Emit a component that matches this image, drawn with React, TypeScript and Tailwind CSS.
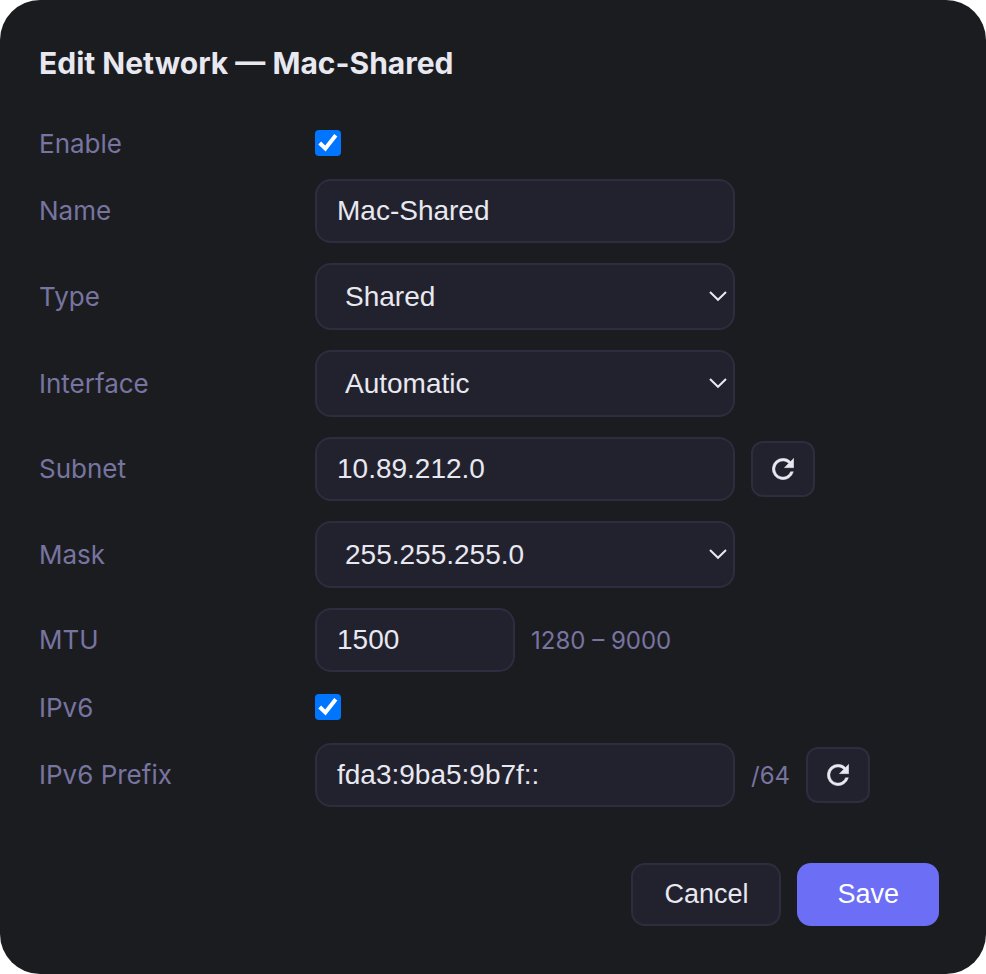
import { useState } from "react";

const fieldClass =
  "bg-[#22222e] border-2 border-[#2e2c3e] rounded-2xl font-['Liberation_Sans',sans-serif] text-[28px] leading-8 text-[#e8e8f0]";

function Row({ id, label, children }: { id: string; label: string; children: React.ReactNode }) {
  return (
    <div className="flex items-center gap-4 min-h-[31px]">
      <label htmlFor={id} className="w-[260px] shrink-0 text-[26px] leading-[30px] text-[#7874a0]">
        {label}
      </label>
      {children}
    </div>
  );
}

type TextFieldProps = {
  id: string;
  value: string;
  onChange: (value: string) => void;
  width?: string;
};

function TextField({ id, value, onChange, width = "w-[420px]" }: TextFieldProps) {
  return (
    <input
      id={id}
      type="text"
      value={value}
      onChange={(e) => onChange(e.target.value)}
      className={`${fieldClass} ${width} h-16 min-w-0 px-5`}
    />
  );
}

type SelectFieldProps = {
  id: string;
  value: string;
  onChange: (value: string) => void;
  options: string[];
};

function SelectField({ id, value, onChange, options }: SelectFieldProps) {
  return (
    <div className="relative w-[420px] min-w-0">
      <select
        id={id}
        value={value}
        onChange={(e) => onChange(e.target.value)}
        className={`${fieldClass} appearance-none block w-full h-[67px] pl-7 pr-10`}
      >
        {options.map((option) => (
          <option key={option}>{option}</option>
        ))}
      </select>
      <svg
        viewBox="0 0 20 11"
        className="absolute right-[7px] top-7 w-5 h-[11px] pointer-events-none"
        fill="none"
        stroke="#e8e8f0"
        strokeWidth="2"
      >
        <path d="M2 1 L10 8.8 L18 1" />
      </svg>
    </div>
  );
}

type CheckFieldProps = {
  id: string;
  checked: boolean;
  onChange: (checked: boolean) => void;
};

function CheckField({ id, checked, onChange }: CheckFieldProps) {
  return (
    <div className="relative h-[27px]">
      <input
        id={id}
        type="checkbox"
        checked={checked}
        onChange={(e) => onChange(e.target.checked)}
        className="appearance-none block w-[26px] h-[26px] rounded-[4px] bg-white checked:bg-[#0075ff]"
      />
      {checked && (
        <svg
          viewBox="0 0 26 26"
          className="absolute left-0 top-0 w-[26px] h-[26px] pointer-events-none"
          fill="none"
          stroke="white"
          strokeWidth="4"
        >
          <path d="M4.7 13 L10.4 18.5 L20.8 5.2" />
        </svg>
      )}
    </div>
  );
}

function RefreshBtn({ label, onClick }: { label: string; onClick: () => void }) {
  return (
    <button
      type="button"
      aria-label={label}
      onClick={onClick}
      className="flex items-center justify-center w-16 h-14 shrink-0 bg-[#22222e] border-2 border-[#2e2c3e] rounded-xl text-[#e8e8f0]"
    >
      <svg
        viewBox="3.8 3.8 16.4 16.4"
        className="w-[22px] h-[22px]"
        fill="currentColor"
        stroke="currentColor"
        strokeWidth="0.3"
      >
        <path d="M17.65 6.35A7.96 7.96 0 0 0 12 4a8 8 0 1 0 7.73 10h-2.08A6 6 0 1 1 12 6c1.66 0 3.14.69 4.22 1.78L13 11h7V4z" />
      </svg>
    </button>
  );
}

export default function App() {
  const [enabled, setEnabled] = useState(true);
  const [name, setName] = useState("Mac-Shared");
  const [type, setType] = useState("Shared");
  const [iface, setIface] = useState("Automatic");
  const [subnet, setSubnet] = useState("10.89.212.0");
  const [mask, setMask] = useState("255.255.255.0");
  const [mtu, setMtu] = useState("1500");
  const [ipv6, setIpv6] = useState(true);
  const [prefix, setPrefix] = useState("fda3:9ba5:9b7f::");

  const randomSubnet = () => {
    const part = () => Math.floor(Math.random() * 256);
    setSubnet(`10.${part()}.${part()}.0`);
  };

  const randomPrefix = () => {
    const part = () => Math.floor(Math.random() * 65536).toString(16);
    setPrefix(`fd${part().slice(0, 2)}:${part()}:${part()}::`);
  };

  return (
    <form
      onSubmit={(e) => e.preventDefault()}
      className="bg-[#1b1c20] rounded-[40px] pl-[39px] pr-[47px] pt-[45px] pb-12 font-[Inter,sans-serif]"
    >
      <h1 className="text-[30px] leading-9 font-bold text-[#e8e8f0] mb-[47px]">
        Edit Network — Mac-Shared
      </h1>

      <div className="flex flex-col gap-5">
        <Row id="enable" label="Enable">
          <CheckField id="enable" checked={enabled} onChange={setEnabled} />
        </Row>
        <Row id="name" label="Name">
          <TextField id="name" value={name} onChange={setName} />
        </Row>
        <Row id="type" label="Type">
          <SelectField id="type" value={type} onChange={setType} options={["Shared", "Bridged", "Host"]} />
        </Row>
        <Row id="interface" label="Interface">
          <SelectField id="interface" value={iface} onChange={setIface} options={["Automatic", "en0", "en1"]} />
        </Row>
        <Row id="subnet" label="Subnet">
          <TextField id="subnet" value={subnet} onChange={setSubnet} />
          <RefreshBtn label="New subnet" onClick={randomSubnet} />
        </Row>
        <Row id="mask" label="Mask">
          <SelectField
            id="mask"
            value={mask}
            onChange={setMask}
            options={["255.255.255.0", "255.255.0.0", "255.0.0.0"]}
          />
        </Row>
        <Row id="mtu" label="MTU">
          <TextField id="mtu" value={mtu} onChange={setMtu} width="w-[200px]" />
          <span className="text-2xl leading-[29px] text-[#7874a0]">1280 – 9000</span>
        </Row>
        <Row id="ipv6" label="IPv6">
          <CheckField id="ipv6" checked={ipv6} onChange={setIpv6} />
        </Row>
        <Row id="prefix" label="IPv6 Prefix">
          <TextField id="prefix" value={prefix} onChange={setPrefix} />
          <span className="text-2xl leading-[29px] text-[#7874a0]">/64</span>
          <RefreshBtn label="New prefix" onClick={randomPrefix} />
        </Row>
      </div>

      <div className="flex justify-end gap-4 mt-14 font-['Liberation_Sans',sans-serif] text-[27px]">
        <button
          type="button"
          className="h-[63px] px-[31px] bg-[#22222e] border-2 border-[#2e2c3e] rounded-[14px] text-[#e8e8f0]"
        >
          Cancel
        </button>
        <button type="submit" className="h-[63px] px-10 bg-[#6c6ef5] rounded-[14px] text-white">
          Save
        </button>
      </div>
    </form>
  );
}
